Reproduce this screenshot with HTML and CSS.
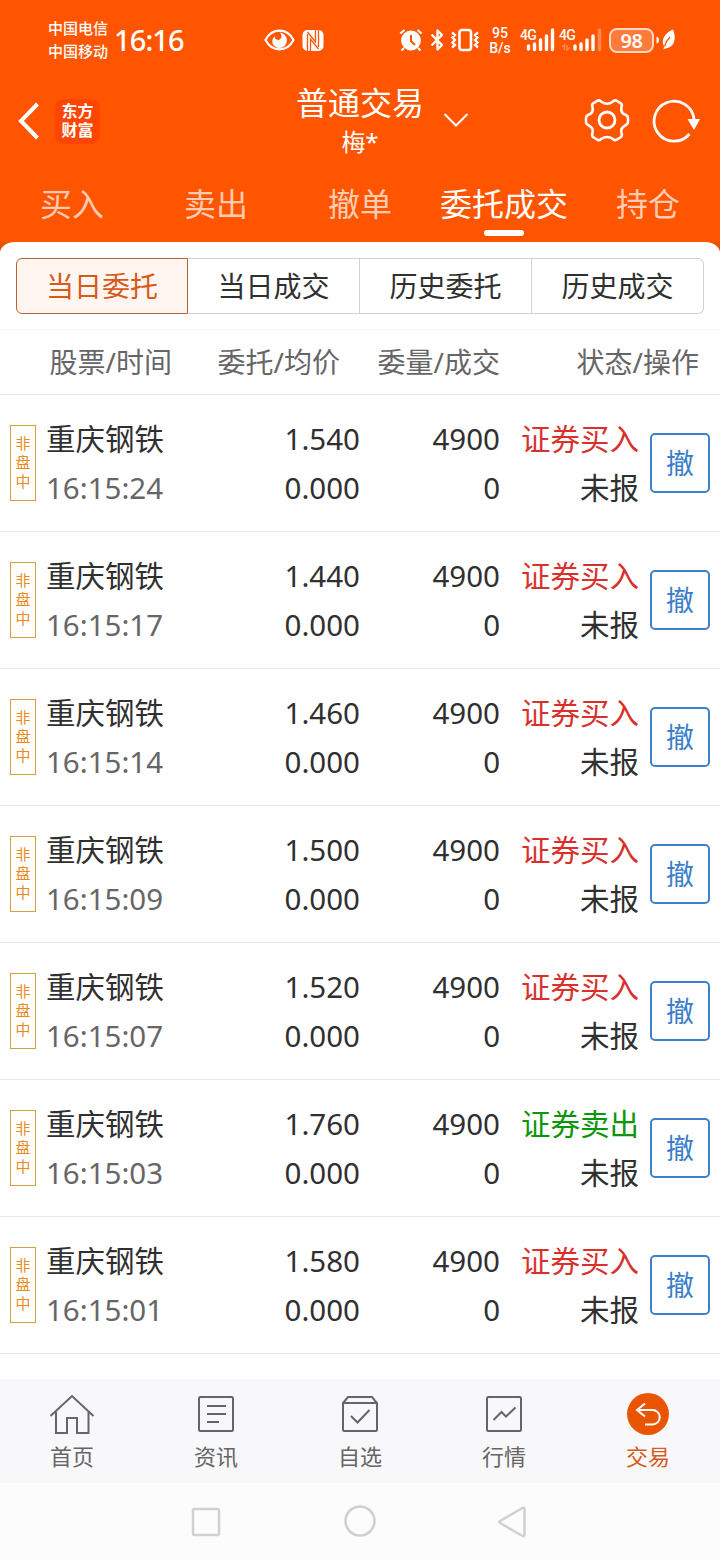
FILE: index.html
```html
<!DOCTYPE html>
<html lang="zh-CN">
<head>
    <meta charset="UTF-8">
    <meta name="viewport" content="width=device-width, initial-scale=1.0">
    <title>普通交易</title>
    <link rel="stylesheet" href="styles.css">
</head>
<body>
    <header class="top">
        <div class="status-bar">
            <div class="carriers"><span>中国电信</span><span>中国移动</span></div>
            <span class="clock">16:16</span>
            <svg class="eye" width="31" height="22" viewBox="0 0 31 22">
                <path d="M1.500 11C8-1.500 23-1.500 29.500 11C23 23.500 8 23.500 1.500 11Z" fill="none" stroke="#fff" stroke-width="2.200"/>
                <path d="M16 3.500C19.500 8 16 12.500 12.500 10.500C10.500 9.500 10.500 8 11 7C5.500 11.500 9 19 15.500 19C24 19 26.500 6 16 3.500Z" fill="#fff"/>
            </svg>
            <svg class="nfc" width="22" height="23" viewBox="0 0 22 23">
                <rect x=".5" y="1" width="21" height="21" rx="5" fill="#fff"/>
                <path d="M5.500 23V5M16.500 0V18M8.500 22V10L16.500 20M13.500 1V13L5.500 3" stroke="#ff5500" stroke-width="1.300" fill="none"/>
            </svg>
            <div class="status-right">
                <svg class="alarm" width="24" height="24" viewBox="0 0 24 24">
                    <circle cx="12" cy="12.500" r="9.900" fill="#fff"/>
                    <path d="M1.300 5.500L5.500 2M22.700 5.500L18.500 2M5 20L2.500 22.500M19 20L21.500 22.500" stroke="#fff" stroke-width="2.200"/>
                    <path d="M12 7V13L16 17" stroke="#ff5500" stroke-width="2" fill="none"/>
                </svg>
                <svg class="bluetooth" width="14" height="24" viewBox="0 0 14 24">
                    <path d="M1.500 6.500L12 17L7.500 21.500V2.500L12 7L1.500 17.500" fill="none" stroke="#fff" stroke-width="2.400" stroke-linejoin="round"/>
                </svg>
                <svg class="vibrate" width="28" height="24" viewBox="0 0 28 24">
                    <rect x="8.500" y="2" width="11.500" height="20" rx="2.500" fill="none" stroke="#fff" stroke-width="2.600"/>
                    <path d="M1 4.500L4 7L1.500 9.500L4 12L1.500 14.500L4 17L1 19.500M27 4.500L24 7L26.500 9.500L24 12L26.500 14.500L24 17L27 19.500" fill="none" stroke="#fff" stroke-width="2.300"/>
                </svg>
                <div class="speed"><span>95</span><span>B/s</span></div>
                <div class="signal">
                    <span>4G</span>
                    <svg width="34" height="24" viewBox="0 0 34 24">
                        <path d="M7.500 18V21M13.500 16V21.500M19.500 12V21.500M25.500 8V21.500M31.500 2V21.500" stroke="#fff" stroke-width="3.400" stroke-linecap="round"/>
                    </svg>
                </div>
                <div class="signal second">
                    <span>4G</span>
                    <svg width="42" height="24" viewBox="0 0 42 24">
                        <path d="M15 18V21M21 16V21.500M27 12V21.500M33 8V21.500" stroke="#fff" stroke-width="3.400" stroke-linecap="round"/>
                        <path d="M39.500 2V21.500" stroke="#ff8a50" stroke-width="3.400" stroke-linecap="round"/>
                        <path d="M2 19L4.500 17V22M7 17V22L10 19.500" stroke="#ff8a50" stroke-width="1.500" fill="none"/>
                    </svg>
                </div>
                <div class="battery">98</div>
                <svg class="leaf" width="20" height="24" viewBox="0 0 20 24">
                    <path d="M.500 8.500Q3 9 3 12Q3 15 .500 15.500Z" fill="#fff"/>
                    <path d="M17 1.500C9 5 4.500 12 8 18L7.500 21.500L9.500 20.500C18 19.500 21 11 17 1.500Z" fill="#fff"/>
                    <path d="M8.500 18.500Q10 13 14 9" fill="none" stroke="#ff5500" stroke-width="1.300"/>
                </svg>
            </div>
        </div>

        <div class="title-bar">
            <div class="title-left">
                <svg width="24" height="38" viewBox="0 0 24 38">
                    <path d="M21.500 2L5 19L21.500 36" fill="none" stroke="#fff" stroke-width="4"/>
                </svg>
                <div class="logo">东方<br>财富</div>
            </div>
            <div class="account">
                <div class="account-title">普通交易</div>
                <div class="account-name">梅*</div>
                <svg class="chevron" width="26" height="16" viewBox="0 0 26 16">
                    <path d="M1.500 2L13 13.500L24.500 2" fill="none" stroke="#fff" stroke-width="2"/>
                </svg>
            </div>
            <div class="title-right">
                <svg width="46" height="46" viewBox="0 0 46 46">
                    <path d="M14 2.500Q16 2 17 3.500Q23 8 29 3.500Q30 2 32 2.500L37 5.500Q38.500 7 37.500 9Q36 15 42 17Q44 18 44 20V24Q44 26 42 27Q36 30 37.500 35Q38.500 37.500 37 39L32 42Q30 42.500 29 41Q23 37 17 41Q16 42.500 14 42L9 39Q7.500 37.500 8.500 35Q10 30 4 27Q2 26 2 24V20Q2 18 4 17Q10 15 8.500 9Q7.500 7 9 5.500Z" fill="none" stroke="#fff" stroke-width="2.600"/>
                    <circle cx="23" cy="22" r="8" fill="none" stroke="#fff" stroke-width="2.800"/>
                </svg>
                <svg class="refresh" width="50" height="46" viewBox="0 0 50 46">
                    <path d="M37.500 36A20 20 0 1 1 42 21" fill="none" stroke="#fff" stroke-width="2.800"/>
                    <path d="M35.500 21H48L42 32Z" fill="#fff"/>
                </svg>
            </div>
        </div>

        <nav class="tabs">
            <a>买入</a>
            <a>卖出</a>
            <a>撤单</a>
            <a class="active">委托成交</a>
            <a>持仓</a>
        </nav>
    </header>

    <main class="panel">
        <div class="segments">
            <button class="selected">当日委托</button>
            <button>当日成交</button>
            <button>历史委托</button>
            <button>历史成交</button>
        </div>
        <div class="list-head">
            <span class="head-stock">股票/时间</span>
            <span class="head-price">委托/均价</span>
            <span class="head-amount">委量/成交</span>
            <span class="head-state">状态/操作</span>
        </div>
        <div id="orders"></div>
    </main>

    <nav class="bottom-nav">
        <a>
            <svg width="46" height="46" viewBox="0 0 46 46">
                <path d="M1.500 24L23 4L44.500 24M7 20V41H18V26H28V41H39.500V20" fill="none" stroke="#666" stroke-width="2"/>
            </svg>
            首页
        </a>
        <a>
            <svg width="46" height="46" viewBox="0 0 46 46">
                <rect x="6" y="5" width="34" height="34" rx="1.500" fill="none" stroke="#666" stroke-width="2"/>
                <path d="M14 14H33M14 22H33M14 30H26" stroke="#666" stroke-width="2"/>
            </svg>
            资讯
        </a>
        <a>
            <svg width="46" height="46" viewBox="0 0 46 46">
                <path d="M6 11L11 5H35L40 11V37.500Q40 39 38.500 39H7.500Q6 39 6 37.500ZM6 11H40M14 24L20.500 30.500L32.500 18" fill="none" stroke="#666" stroke-width="2"/>
            </svg>
            自选
        </a>
        <a>
            <svg width="46" height="46" viewBox="0 0 46 46">
                <rect x="6" y="5" width="34" height="34" rx="1.500" fill="none" stroke="#666" stroke-width="2"/>
                <path d="M12.500 28L20.500 20L25 24.500L34.500 15.500" fill="none" stroke="#666" stroke-width="2"/>
            </svg>
            行情
        </a>
        <a class="active">
            <svg width="46" height="46" viewBox="0 0 46 46">
                <circle cx="23" cy="22" r="21" fill="#ea5504"/>
                <path d="M20 11.500L12 18L20 24.500M12 18H27.500A7 7 0 0 1 27.500 32.500H20" fill="none" stroke="#fff" stroke-width="2"/>
            </svg>
            交易
        </a>
    </nav>

    <div class="system-nav">
        <svg width="34" height="34" viewBox="0 0 34 34"><rect x="4" y="4" width="26" height="26" rx="1.500"/></svg>
        <svg width="34" height="34" viewBox="0 0 34 34"><circle cx="17" cy="16" r="14.500"/></svg>
        <svg width="34" height="34" viewBox="0 0 34 34"><path d="M25.500 3Q27.500 2 27.500 4.500V29.500Q27.500 32 25.500 31L3 18Q1.500 17 3 16Z"/></svg>
    </div>

    <script>
        const orders = [
            { time: '16:15:24', price: '1.540', side: 'buy' },
            { time: '16:15:17', price: '1.440', side: 'buy' },
            { time: '16:15:14', price: '1.460', side: 'buy' },
            { time: '16:15:09', price: '1.500', side: 'buy' },
            { time: '16:15:07', price: '1.520', side: 'buy' },
            { time: '16:15:03', price: '1.760', side: 'sell' },
            { time: '16:15:01', price: '1.580', side: 'buy' }
        ];

        document.getElementById('orders').innerHTML = orders.map(order => `
            <div class="order">
                <div class="tag"><span>非</span><span>盘</span><span>中</span></div>
                <div class="stock"><div>重庆钢铁</div><div class="time">${order.time}</div></div>
                <div class="price"><div>${order.price}</div><div>0.000</div></div>
                <div class="amount"><div>4900</div><div>0</div></div>
                <div class="state">
                    <div class="${order.side}">${order.side === 'buy' ? '证券买入' : '证券卖出'}</div>
                    <div>未报</div>
                </div>
                <button class="cancel">撤</button>
            </div>
        `).join('');
    </script>
</body>
</html>
```

FILE: styles.css
```css
* {
    box-sizing: border-box;
}
body {
    margin: 0;
    width: 720px;
    height: 1560px;
    display: flex;
    flex-direction: column;
    overflow: hidden;
    font-family: "Noto Sans", "Noto Sans CJK SC", sans-serif;
    color: #303030;
    background: #fff;
}
svg {
    display: block;
    flex: none;
}
button {
    font-family: inherit;
    padding: 0;
    background: #fff;
}
.top {
    height: 242px;
    flex: none;
    background: #ff5500;
    color: #fff;
}

/* status bar */
.status-bar {
    height: 80px;
    padding-left: 48px;
    display: flex;
    align-items: center;
}
.carriers {
    display: flex;
    flex-direction: column;
    width: 66px;
    font-size: 15px;
    font-weight: 500;
    line-height: 23px;
}
.clock {
    width: 150px;
    font-size: 29px;
    font-weight: 500;
    letter-spacing: -0.9px;
    line-height: 40px;
}
.nfc {
    margin-left: 7px;
}
.status-right {
    display: flex;
    align-items: center;
    margin-left: 75px;
}
.bluetooth {
    margin-left: 7px;
}
.vibrate {
    margin-left: 7px;
}
.speed {
    display: flex;
    flex-direction: column;
    align-items: center;
    width: 24px;
    margin-left: 9px;
    padding-top: 1px;
    font-family: Roboto, sans-serif;
    font-size: 14px;
    font-weight: 500;
    line-height: 15px;
}
.signal {
    position: relative;
    margin-left: 9px;
}
.signal.second {
    margin-left: 5px;
}
.signal span {
    position: absolute;
    left: -1px;
    top: 1px;
    font-family: Roboto, sans-serif;
    font-size: 14px;
    font-weight: 500;
    letter-spacing: -0.8px;
    line-height: 13px;
}
.battery {
    width: 45px;
    height: 25px;
    margin-left: 7px;
    border: 2px solid #ffd8c4;
    border-radius: 8px;
    background: #ff7b3c;
    font-size: 20px;
    font-weight: 600;
    letter-spacing: -0.5px;
    line-height: 21px;
    text-align: center;
}
.leaf {
    margin-left: 2px;
}

/* title bar */
.title-bar {
    height: 82px;
    padding: 0 17px 0 16px;
    display: flex;
    justify-content: space-between;
}
.title-left {
    width: 120px;
    display: flex;
    align-items: center;
}
.logo {
    width: 45px;
    height: 45px;
    margin-left: 15px;
    padding-top: 3px;
    border-radius: 9px;
    background: #ff4500;
    font-size: 16px;
    font-weight: 700;
    line-height: 19px;
    text-align: center;
}
.account {
    position: relative;
    width: 128px;
    text-align: center;
}
.account-title {
    padding-top: 3px;
    font-size: 32px;
    line-height: 40px;
}
.account-name {
    font-size: 24px;
    line-height: 38px;
}
.chevron {
    position: absolute;
    left: 147px;
    top: 32px;
}
.title-right {
    display: flex;
    align-items: center;
    width: 119px;
}
.refresh {
    margin-left: 22px;
}

.tabs {
    display: flex;
    height: 80px;
}
.tabs a {
    flex: 1;
    display: flex;
    flex-direction: column;
    align-items: center;
    padding-top: 20px;
    font-size: 32px;
    line-height: 44px;
    white-space: nowrap;
    color: #ffccb2;
}
.tabs .active {
    color: #fff;
}
.tabs .active::after {
    content: "";
    width: 40px;
    height: 6px;
    margin-top: 4px;
    border-radius: 3px;
    background: #fff;
}

/* order list */
.panel {
    height: 1137px;
    flex: none;
    background: linear-gradient(#e65307 10px, #fff 10px);
}
.segments {
    display: flex;
    height: 88px;
    padding: 16px;
    border-bottom: 1px solid #f5f5f5;
    border-radius: 15px 15px 0 0 / 11px 11px 0 0;
    background: #fff;
}
.segments button {
    flex: 0 0 172px;
    height: 56px;
    border: 1px solid #d0d2d3;
    border-left-width: 0;
    font-size: 28px;
    line-height: 54px;
    color: #303030;
}
.segments button:last-child {
    border-radius: 0 6px 6px 0;
}
.segments .selected {
    border: 1px solid #c06030;
    border-radius: 6px 0 0 6px;
    background: #fff6f2;
    color: #d85a18;
}
.list-head {
    display: flex;
    height: 65px;
    padding-right: 21px;
    border-bottom: 1px solid #eaeaea;
    font-size: 28px;
    line-height: 65px;
    color: #666;
    text-align: right;
}
.head-stock {
    width: 172px;
}
.head-price {
    width: 168px;
}
.head-amount {
    width: 160px;
}
.head-state {
    flex: 1;
}
.order {
    display: flex;
    height: 137px;
    padding: 19px 10px 0;
    border-bottom: 1px solid #eaeaea;
    font-size: 29.5px;
    line-height: 49px;
    text-align: right;
}
.tag {
    display: flex;
    flex-direction: column;
    align-items: center;
    width: 26px;
    height: 76px;
    margin-top: 11px;
    padding-top: 8px;
    border: 1px solid #d4a040;
    font-size: 15px;
    line-height: 19px;
    color: #e88a1c;
}
.stock {
    width: 144px;
    margin-left: 10px;
    text-align: left;
}
.time {
    color: #666;
}
.price {
    width: 170px;
}
.amount {
    width: 140px;
}
.state {
    width: 139px;
}
.buy {
    color: #d9302c;
}
.sell {
    color: #0a960a;
}
.cancel {
    width: 60px;
    height: 60px;
    margin: 19px 0 0 11px;
    border: 2px solid #3f80c8;
    border-radius: 5px;
    font-size: 28px;
    line-height: 56px;
    color: #3a7ecb;
}

.bottom-nav {
    display: flex;
    height: 104px;
    flex: none;
    background: #f8f8fa;
}
.bottom-nav a {
    flex: 1;
    display: flex;
    flex-direction: column;
    align-items: center;
    padding-top: 13px;
    font-size: 22px;
    line-height: 36px;
    color: #666;
}
.bottom-nav .active {
    color: #d85a18;
}
.system-nav {
    display: flex;
    justify-content: center;
    gap: 120px;
    flex: 1;
    padding-top: 22px;
    background: #fcfcfc;
}
.system-nav svg {
    fill: none;
    stroke: #d0d0d0;
    stroke-width: 2.5;
}
```
